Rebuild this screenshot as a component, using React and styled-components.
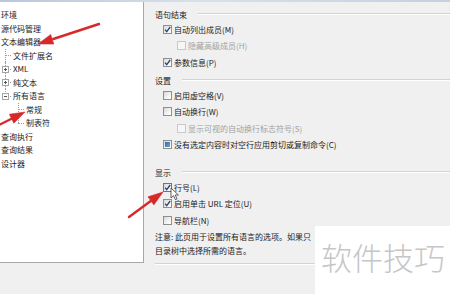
import React from 'react'
import styled, { createGlobalStyle } from 'styled-components'

const GlobalStyle = createGlobalStyle`
  html, body {
    margin: 0;
    padding: 0;
    background: #f0f0f0;
  }
  body {
    font-family: "Noto Sans CJK SC", "Microsoft YaHei", sans-serif;
  }
`

const Page = styled.div`
  position: relative;
  width: 450px;
  height: 294px;
  overflow: hidden;
  background: #f0f0f0;
  font-size: 8px;
  color: #1b1b1b;
  white-space: nowrap;
`

const TitleStrip = styled.div`
  height: 2px;
  background: linear-gradient(90deg, #b9c8d9 0%, #d8e1eb 45%, #c3d1e0 100%);
`

const Body = styled.div`
  display: flex;
  align-items: flex-start;
`

const TreePanel = styled.div`
  flex-shrink: 0;
  width: 145px;
  height: 261px;
  box-sizing: border-box;
  margin-left: -1px;
  padding-top: 6px;
  background: #fff;
  border: 1px solid #a8a8a8;
  border-top: none;
`

const TreeRow = styled.div`
  display: flex;
  align-items: center;
  height: 13.5px;
  line-height: 13.5px;
`

const TreeLabel = styled.span`
  padding-left: ${(p) => (p.$root ? 1 : 0)}px;
`

const Guide = styled.span`
  position: relative;
  flex-shrink: 0;
  width: 13px;
  height: 100%;

  &::before {
    content: '';
    display: ${(p) => (p.$kind === 'blank' ? 'none' : 'block')};
    position: absolute;
    left: 5px;
    top: 0;
    bottom: ${(p) => (p.$kind === 'corner' ? '50%' : '0')};
    border-left: 1px dotted #9a9a9a;
  }

  &::after {
    content: '';
    display: ${(p) => (p.$kind === 'blank' || p.$kind === 'pipe' ? 'none' : 'block')};
    position: absolute;
    left: 5px;
    top: 50%;
    width: 6px;
    border-top: 1px dotted #9a9a9a;
  }
`

const Expander = styled.span`
  position: absolute;
  z-index: 1;
  left: 2px;
  top: 50%;
  width: 7px;
  height: 7px;
  margin-top: -3px;
  box-sizing: border-box;
  border: 1px solid #a4a4a4;
  background: #fff;

  &::before {
    content: '';
    position: absolute;
    left: 1px;
    right: 1px;
    top: 2px;
    border-top: 1px solid #555;
  }

  &::after {
    content: '';
    display: ${(p) => (p.$open ? 'none' : 'block')};
    position: absolute;
    top: 1px;
    bottom: 1px;
    left: 2px;
    border-left: 1px solid #555;
  }
`

const OptionsPane = styled.div`
  flex: 1;
  min-width: 0;
  padding: 5px 0 0 11px;
`

const GroupHeading = styled.div`
  display: flex;
  align-items: center;
  gap: 11px;
  height: 14px;
  margin-top: ${(p) => p.$space || 0}px;

  &::after {
    content: '';
    flex: 1;
    border-top: 1px solid #d3d3d3;
    border-bottom: 1px solid #fdfdfd;
  }
`

const CheckRow = styled.label`
  display: flex;
  align-items: center;
  gap: 2px;
  height: 16.5px;
  padding-left: ${(p) => (p.$nested ? 22 : 8)}px;
  color: ${(p) => (p.$disabled ? '#a2a2a2' : '#1b1b1b')};
`

const Box = styled.span`
  display: inline-flex;
  align-items: center;
  justify-content: center;
  flex-shrink: 0;
  width: 9px;
  height: 9px;
  box-sizing: border-box;
  border: 1px solid ${(p) => (p.$disabled ? '#c9c9c9' : p.$hot ? '#3f80b8' : '#8e8f8f')};
  background: ${(p) =>
    p.$disabled ? '#f6f6f6' : 'linear-gradient(135deg, #d9d9d9 0%, #f4f4f4 60%, #ffffff 100%)'};
`

const MixedFill = styled.span`
  width: 5px;
  height: 5px;
  background: linear-gradient(135deg, #2f6aa8, #6fa3d2);
`

const Note = styled.p`
  margin: 1px 0 0;
  line-height: 14px;
`

const BottomRule = styled.div`
  margin-top: 5px;
  border-top: 1px solid #d3d3d3;
  border-bottom: 1px solid #fdfdfd;
`

const Annotations = styled.svg`
  position: absolute;
  left: 0;
  top: 0;
  pointer-events: none;
`

const Watermark = styled.div`
  position: absolute;
  left: 315px;
  top: 226px;
  right: 0;
  bottom: 0;
  padding: 15px 0 0 6px;
  background: #fff;
  color: #c6c6c6;
  font-size: 31px;
  font-weight: 300;
  line-height: 1;
`

const treeItems = [
  { label: '环境' },
  { label: '源代码管理' },
  { label: '文本编辑器' },
  { label: '文件扩展名', guides: ['tee'] },
  { label: 'XML', guides: ['tee'], expander: 'closed' },
  { label: '纯文本', guides: ['tee'], expander: 'closed' },
  { label: '所有语言', guides: ['corner'], expander: 'open' },
  { label: '常规', guides: ['blank', 'tee'] },
  { label: '制表符', guides: ['blank', 'corner'] },
  { label: '查询执行' },
  { label: '查询结果' },
  { label: '设计器' },
]

const groups = [
  {
    title: '语句结束',
    space: 0,
    rows: [
      { label: '自动列出成员(M)', state: 'checked' },
      { label: '隐藏高级成员(H)', nested: true, disabled: true },
      { label: '参数信息(P)', state: 'checked' },
    ],
  },
  {
    title: '设置',
    space: 2.5,
    rows: [
      { label: '启用虚空格(V)' },
      { label: '自动换行(W)' },
      { label: '显示可视的自动换行标志符号(S)', nested: true, disabled: true },
      { label: '没有选定内容时对空行应用剪切或复制命令(C)', state: 'mixed' },
    ],
  },
  {
    title: '显示',
    space: 12,
    rows: [
      { label: '行号(L)', state: 'checked', hot: true },
      { label: '启用单击 URL 定位(U)', state: 'checked' },
      { label: '导航栏(N)' },
    ],
  },
]

function CheckBox({ state, disabled, hot }) {
  return (
    <Box $disabled={disabled} $hot={hot}>
      {state === 'checked' && (
        <svg width='7' height='7' viewBox='0 0 7 7'>
          <path d='M1 3.6 L2.7 5.6 L6.2 1' fill='none' stroke={hot ? '#1c3f86' : '#2b4272'} strokeWidth='1.3' />
        </svg>
      )}
      {state === 'mixed' && <MixedFill />}
    </Box>
  )
}

function arrowHead(tail, tip, len, half) {
  const dx = tip[0] - tail[0]
  const dy = tip[1] - tail[1]
  const d = Math.hypot(dx, dy)
  const ux = dx / d
  const uy = dy / d
  const bx = tip[0] - ux * len
  const by = tip[1] - uy * len
  return [
    [tip[0], tip[1]],
    [bx - uy * half, by + ux * half],
    [bx + uy * half, by - ux * half],
  ]
    .map((p) => p.join(','))
    .join(' ')
}

const arrows = [
  { tail: [99, 24], tip: [38, 44] },
  { tail: [-3, 126], tip: [25, 112] },
  { tail: [129, 217], tip: [163, 192] },
]

export default function App() {
  return (
    <Page>
      <GlobalStyle />
      <TitleStrip />
      <Body>
        <TreePanel>
          {treeItems.map((item) => (
            <TreeRow key={item.label}>
              {(item.guides || []).map((kind, i, all) => (
                <Guide key={i} $kind={kind}>
                  {i === all.length - 1 && item.expander && <Expander $open={item.expander === 'open'} />}
                </Guide>
              ))}
              <TreeLabel $root={!item.guides}>{item.label}</TreeLabel>
            </TreeRow>
          ))}
        </TreePanel>

        <OptionsPane>
          {groups.map((group) => (
            <React.Fragment key={group.title}>
              <GroupHeading $space={group.space}>{group.title}</GroupHeading>
              {group.rows.map((row) => (
                <CheckRow key={row.label} $nested={row.nested} $disabled={row.disabled}>
                  <CheckBox state={row.state} disabled={row.disabled} hot={row.hot} />
                  {row.label}
                </CheckRow>
              ))}
            </React.Fragment>
          ))}
          <Note>
            注意: 此页用于设置所有语言的选项。如果只
            <br />
            目录树中选择所需的语言。
          </Note>
          <BottomRule />
        </OptionsPane>
      </Body>

      <Annotations width='450' height='294' viewBox='0 0 450 294'>
        {arrows.map((a, i) => (
          <g key={i} fill='#d62a2a' stroke='#d62a2a'>
            <line
              x1={a.tail[0]}
              y1={a.tail[1]}
              x2={(a.tail[0] + a.tip[0] * 3) / 4}
              y2={(a.tail[1] + a.tip[1] * 3) / 4}
              strokeWidth='2.4'
              strokeLinecap='round'
            />
            <polygon points={arrowHead(a.tail, a.tip, 15, 5)} strokeWidth='0.6' strokeLinejoin='round' />
          </g>
        ))}
        <path
          d='M171 188 L171 198 L173.5 195.6 L175.4 199.6 L177 198.9 L175.2 195 L178.4 195 Z'
          fill='#fff'
          stroke='#222'
          strokeWidth='0.7'
          strokeLinejoin='round'
        />
      </Annotations>

      <Watermark>软件技巧</Watermark>
    </Page>
  )
}
